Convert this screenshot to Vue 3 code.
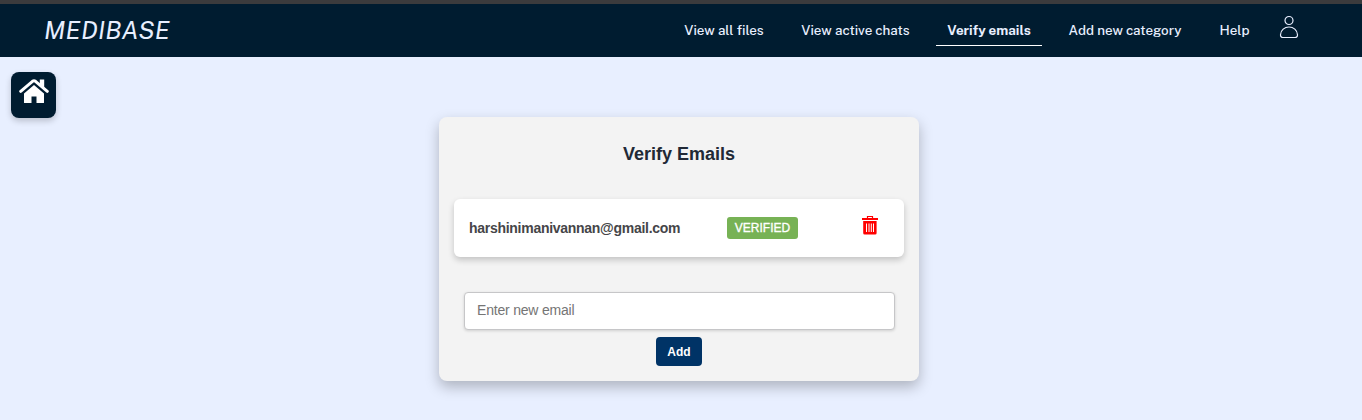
<script setup>
import { ref } from 'vue'

const links = [
  { label: 'View all files', width: 102 },
  { label: 'View active chats', width: 131 },
  { label: 'Verify emails', width: 106, active: true },
  { label: 'Add new category', width: 136 },
  { label: 'Help', width: 53 },
]
const emails = ref([{ address: 'harshinimanivannan@gmail.com', status: 'VERIFIED' }])
const newEmail = ref('')
</script>

<template>
  <div class="page">
    <header class="navbar">
      <a class="brand">MEDIBASE</a>
      <nav class="links">
        <a
          v-for="link in links"
          :key="link.label"
          class="link"
          :class="{ active: link.active }"
          :style="{ width: link.width + 'px' }"
        >{{ link.label }}</a>
      </nav>
      <svg class="user" width="20" height="24" viewBox="0 0 20 24" fill="none" stroke="#e8efff" stroke-width="1.2">
        <circle cx="10" cy="5.5" r="4" />
        <path d="M10 12C5.6 12 1.7 15 1.5 19.7C1.4 21.5 2.4 22.5 4 22.5H16C17.6 22.5 18.6 21.5 18.5 19.7C18.3 15 14.4 12 10 12Z" />
      </svg>
    </header>

    <main class="content">
      <button class="home" aria-label="Home">
        <svg width="30" height="25" viewBox="0 0 30 25" fill="#fff">
          <path d="M20.8 0.5H25.2V10L20.8 6Z" />
          <path d="M1.7 12.3L13.5 2.3Q15 1.2 16.5 2.3L28.3 12.3" fill="none" stroke="#fff" stroke-width="3" stroke-linecap="round" stroke-linejoin="round" />
          <path d="M15 6L25 14.4V23.5Q25 24 24.5 24H17.5V17.5H12.5V24H5.5Q5 24 5 23.5V14.4Z" />
        </svg>
      </button>

      <section class="card">
        <h2 class="title">Verify Emails</h2>
        <div v-for="email in emails" :key="email.address" class="row">
          <span class="address">{{ email.address }}</span>
          <span class="badge">{{ email.status }}</span>
          <svg class="trash" width="16" height="20" viewBox="0 0 16 20">
            <path d="M5.5 3V1.5H10.5V3" fill="none" stroke="red" stroke-width="1.2" />
            <path d="M0 3H16V5H0Z" fill="red" />
            <path d="M1.2 6H14.6V18Q14.6 19.5 13.1 19.5H2.7Q1.2 19.5 1.2 18Z" fill="red" />
            <path d="M4.5 8.5V17M7 8.5V17M9.3 8.5V17M11.5 8.5V17" stroke="#fff" stroke-width="1" />
          </svg>
        </div>
        <input v-model="newEmail" class="field" type="email" placeholder="Enter new email" />
        <button class="add">Add</button>
      </section>
    </main>
  </div>
</template>

<style>
body {
  background: #e8efff;
}
</style>

<style scoped>
.page {
  height: 420px;
  overflow: hidden;
  box-sizing: border-box;
  border-top: 4px solid #3b3b3d;
  font-family: "Liberation Sans", Arial, sans-serif;
}
.navbar {
  display: flex;
  height: 53px;
  padding: 0 63px 0 44px;
  box-sizing: border-box;
  align-items: flex-start;
  background: #001c30;
  color: #e8efff;
  font-family: "Public Sans", Inter, sans-serif;
}
.brand {
  font-size: 25px;
  font-style: italic;
  letter-spacing: 0.2px;
  line-height: 30px;
  margin-top: 11px;
  white-space: nowrap;
}
.links {
  display: flex;
  gap: 15px;
  margin: 12px 18px 0 auto;
}
.link {
  height: 30px;
  box-sizing: border-box;
  border-bottom: 1px solid transparent;
  font-size: 13.4px;
  font-weight: 500;
  line-height: 29px;
  text-align: center;
  white-space: nowrap;
}
.active {
  border-bottom-color: #fff;
  font-weight: 700;
}
.user {
  margin-top: 11px;
}
.content {
  display: flex;
  align-items: flex-start;
}
.home {
  width: 45px;
  height: 46px;
  margin: 15px 0 0 11px;
  padding: 7px 0 0;
  border: 0;
  border-radius: 8px;
  background: #001c30;
  box-shadow: 0 3px 6px rgba(0, 0, 0, 0.2);
  display: flex;
  justify-content: center;
  align-items: flex-start;
}
.card {
  width: 480px;
  height: 264px;
  margin: 60px 0 0 383px;
  padding: 0 15px;
  box-sizing: border-box;
  display: flex;
  flex-direction: column;
  border-radius: 8px;
  background: #f3f3f3;
  box-shadow: 0 6px 14px rgba(0, 0, 0, 0.25);
}
.title {
  margin: 25px 0 33px;
  font-size: 18px;
  line-height: 24px;
  text-align: center;
  color: #212936;
}
.row {
  display: flex;
  align-items: center;
  height: 58px;
  padding: 0 15px;
  box-sizing: border-box;
  border-radius: 6px;
  background: #fff;
  box-shadow: 0 3px 6px rgba(0, 0, 0, 0.2);
}
.address {
  width: 258px;
  font-size: 14px;
  letter-spacing: -0.28px;
  font-weight: 700;
  color: #454548;
}
.badge {
  width: 71px;
  height: 22px;
  border-radius: 3px;
  background: #77b255;
  color: #fff;
  font-size: 12px;
  line-height: 22px;
  text-align: center;
  -webkit-text-stroke: 0.3px #fff;
}
.trash {
  margin: -6px 11px 0 auto;
}
.field {
  height: 38px;
  margin: 35px 9px 7px 10px;
  padding: 0 11px 2px 12px;
  box-sizing: border-box;
  border: 1px solid #c6c6c8;
  border-radius: 4px;
  background: #fff;
  font: 14px "Liberation Sans", Arial, sans-serif;
  letter-spacing: -0.2px;
  box-shadow: 0 1px 3px rgba(0, 0, 0, 0.15);
}
.field::placeholder {
  color: #757575;
}
.add {
  width: 46px;
  height: 29px;
  margin-left: 202px;
  padding: 0;
  border: 0;
  border-radius: 4px;
  background: #003366;
  color: #fff;
  font: bold 12px "Liberation Sans", Arial, sans-serif;
}
</style>
